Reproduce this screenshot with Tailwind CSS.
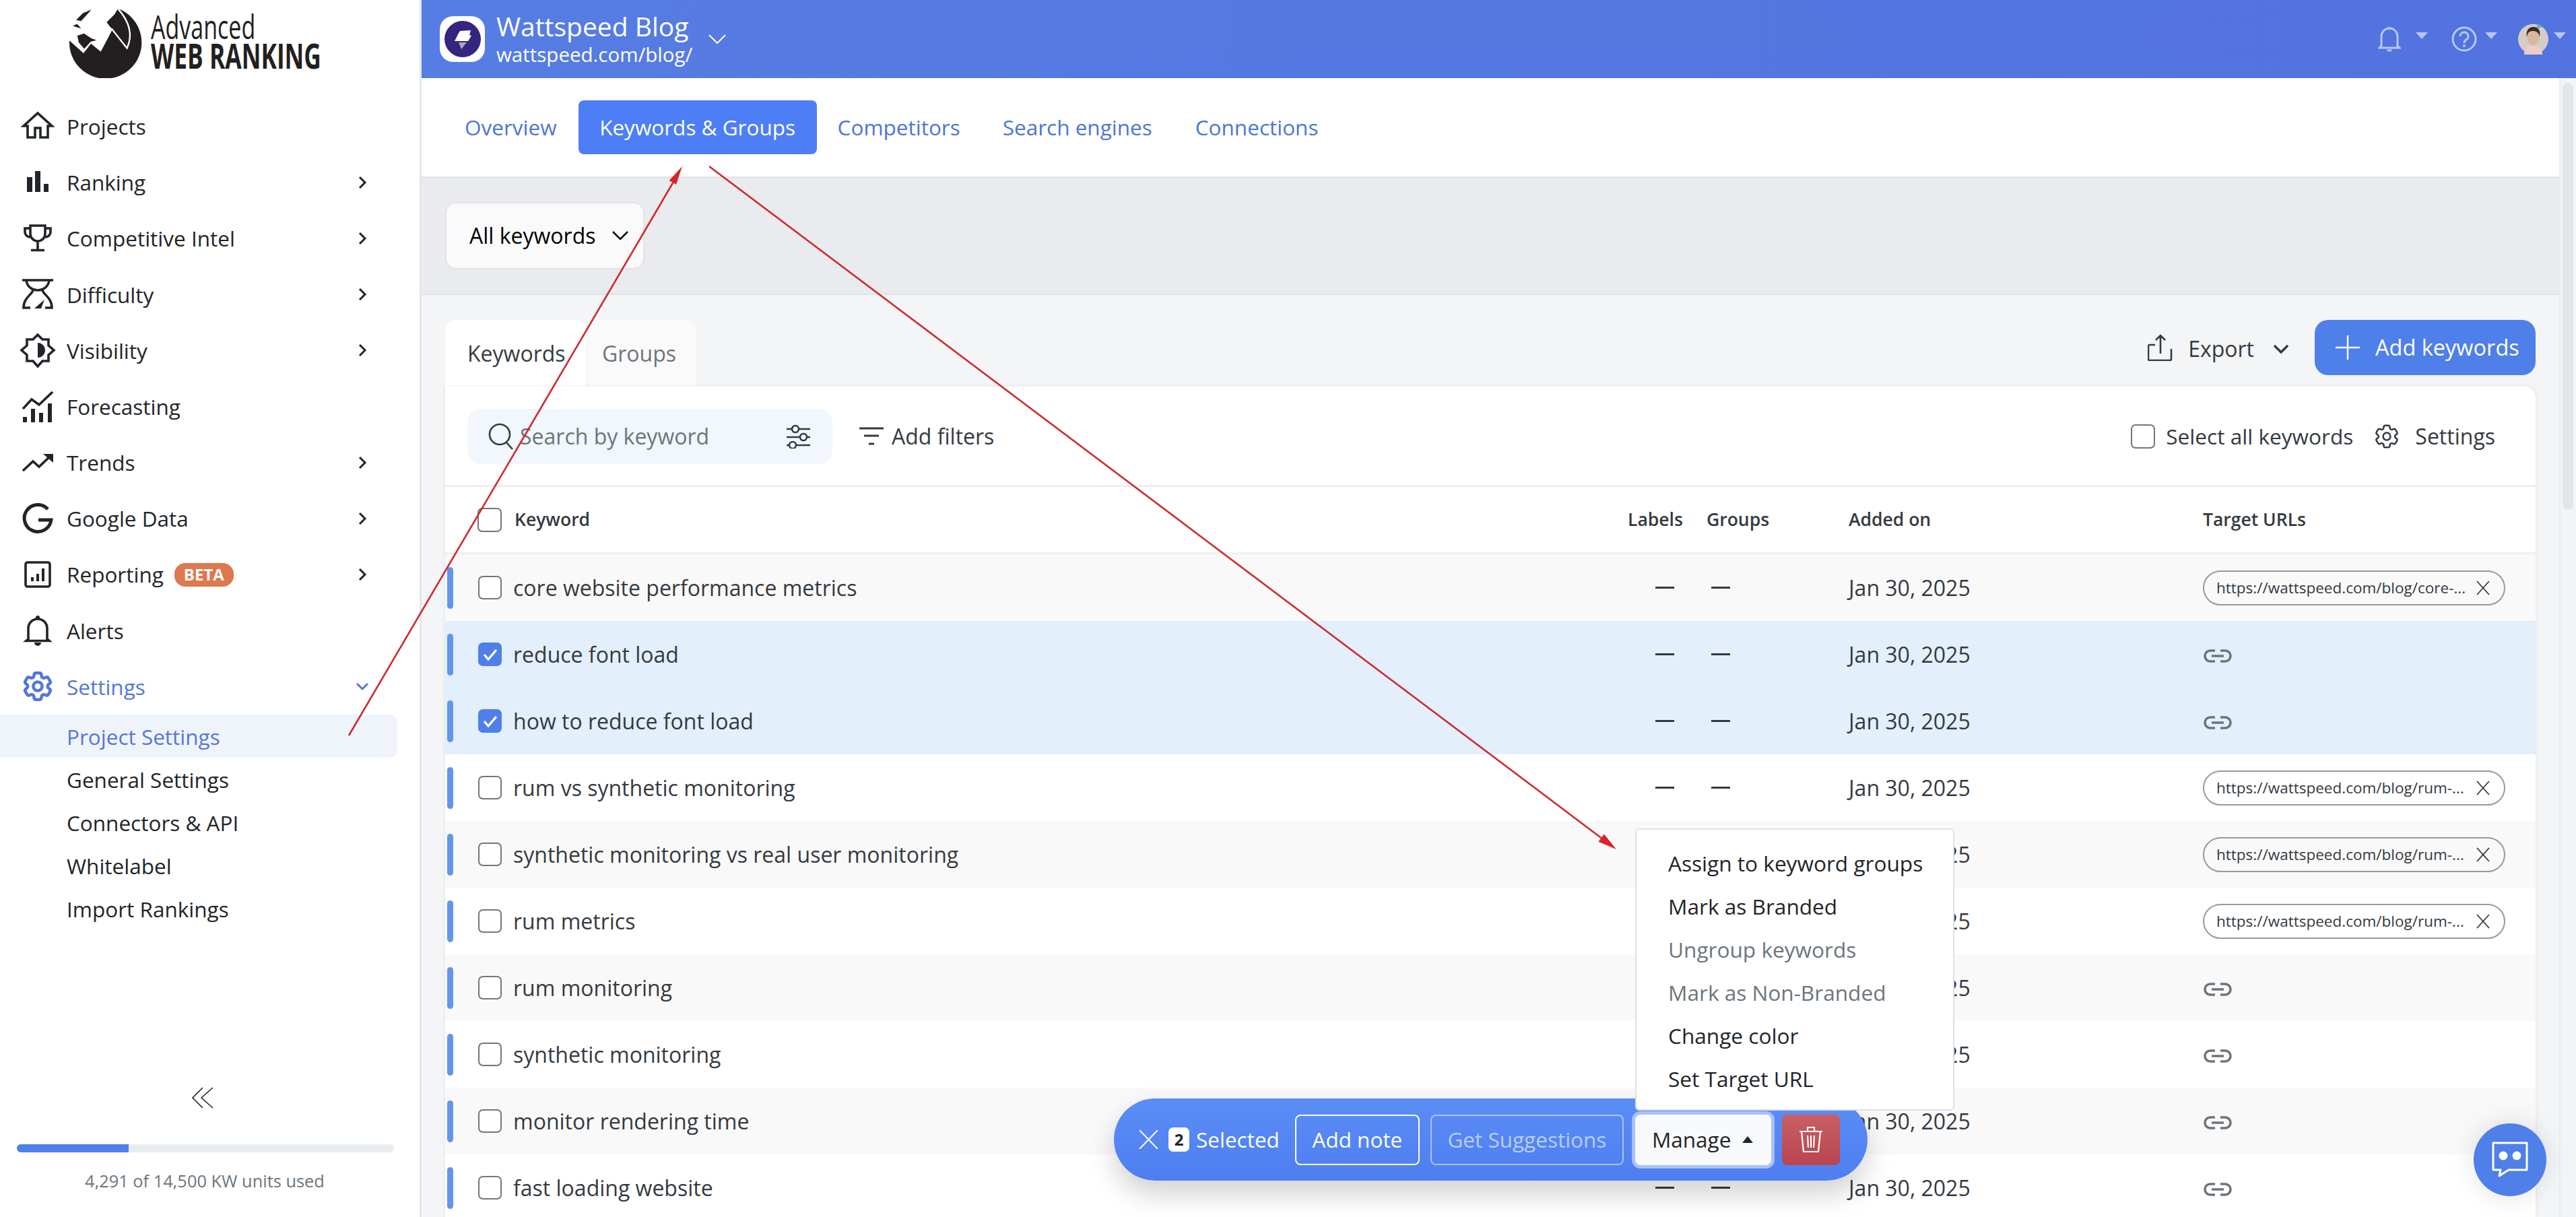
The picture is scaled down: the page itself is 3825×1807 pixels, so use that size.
<!DOCTYPE html>
<html lang="en">
<head>
  <meta charset="UTF-8" />
  <title>Keywords & Groups - Advanced Web Ranking</title>
  <script src="https://cdn.jsdelivr.net/npm/@tailwindcss/browser@4"></script>
</head>
<body class="m-0">
<div class="relative flex w-[3825px] h-[1807px] overflow-hidden bg-white font-['Open_Sans',sans-serif] text-[32px] text-[#212529]">

  <!-- sidebar -->
  <aside class="flex flex-col w-[626px] h-full shrink-0 border-r-[3px] border-[#e4e6ec] bg-white text-[31.5px]">
    <div class="flex h-[116px] pl-[102px] pt-[11px] shrink-0">
      <svg class="w-[109px] h-[105px] shrink-0" viewBox="127 35 325 312">
        <circle cx="290" cy="190" r="160" fill="#231f20" />
        <path d="M120 172 L190 235 L225 190 L268 225 L318 130 L295 100 L330 65 L345 40 L300 15 L110 20 Z" fill="#fff" />
        <path d="M190 235 L225 190 L268 225 L318 130 L385 215 Q425 130 345 40" fill="none" stroke="#fff" stroke-width="7" />
        <path d="M165 160 L195 150 L225 170 L250 180 L225 186 L196 218 L172 190 Z M160 90 L190 60 L228 44 L212 62 L182 95 Z M145 115 L165 108 L182 128 L160 122 Z" fill="#231f20" />
      </svg>
      <div class="ml-[13px] pt-[6px] text-[#231f20]">
        <div class="origin-left scale-x-[0.68] text-[50px] leading-[44px] whitespace-nowrap">Advanced</div>
        <div class="origin-left scale-x-[0.68] text-[52px] leading-[42px] font-bold whitespace-nowrap">WEB RANKING</div>
      </div>
    </div>

    <nav class="flex flex-col pt-[30px]">
      <a class="flex items-center h-[83.2px] pl-[33px]">
        <svg class="w-[46px] h-[46px] mr-[20px] overflow-visible" viewBox="0 0 46 46" fill="none" stroke="#212529" stroke-width="3.6"><path d="M2 22 L23 3 L44 22 H38 V39 H27 V25 H19 V39 H8 V22 Z" /></svg>
        <span>Projects</span>
      </a>
      <a class="flex items-center h-[83.2px] pl-[33px] w-[545px]">
        <svg class="w-[46px] h-[46px] mr-[20px]" viewBox="0 0 46 46" fill="#212529"><rect x="7" y="15" width="8" height="22" /><rect x="19" y="6" width="8" height="31" /><rect x="32" y="25" width="7" height="12" /></svg>
        <span>Ranking</span>
        <svg class="w-[14px] h-[20px] ml-auto" viewBox="0 0 14 20" fill="none" stroke="#212529" stroke-width="3"><path d="M3 2 L11 10 L3 18" /></svg>
      </a>
      <a class="flex items-center h-[83.2px] pl-[33px] w-[545px]">
        <svg class="w-[46px] h-[46px] mr-[20px]" viewBox="0 0 46 46" fill="none" stroke="#212529" stroke-width="3.6"><path d="M12 4 H34 V16 a11 11 0 0 1 -22 0 Z M12 8 H4 V13 a8 8 0 0 0 9 8 M34 8 H42 V13 a8 8 0 0 1 -9 8 M23 27 V40 M13 40.5 H33" /></svg>
        <span>Competitive Intel</span>
        <svg class="w-[14px] h-[20px] ml-auto" viewBox="0 0 14 20" fill="none" stroke="#212529" stroke-width="3"><path d="M3 2 L11 10 L3 18" /></svg>
      </a>
      <a class="flex items-center h-[83.2px] pl-[33px] w-[545px]">
        <svg class="w-[46px] h-[46px] mr-[20px]" viewBox="0 0 46 46" fill="none" stroke="#212529" stroke-width="3.6"><path d="M0 2 H46 M6 3 C8 13 16 17 23 17 C30 17 38 13 40 3 M16 17 C14 24 2 28 2 43 H12 M30 17 C32 24 44 28 44 43 H34" /><path d="M18 44 L33 31 L28 44 Z" fill="#212529" stroke="none" /></svg>
        <span>Difficulty</span>
        <svg class="w-[14px] h-[20px] ml-auto" viewBox="0 0 14 20" fill="none" stroke="#212529" stroke-width="3"><path d="M3 2 L11 10 L3 18" /></svg>
      </a>
      <a class="flex items-center h-[83.2px] pl-[33px] w-[545px]">
        <svg class="w-[46px] h-[46px] mr-[20px] overflow-visible" viewBox="0 0 46 46" fill="none" stroke="#212529" stroke-width="3.6"><path d="M23 0 L30 7 H39 V16 L47 23 L39 30 V39 H30 L23 47 L16 39 H7 V30 L-1 23 L7 16 V7 H16 Z" /><path d="M23 12 a11 11 0 0 1 0 22 Z" fill="#212529" stroke="none" /></svg>
        <span>Visibility</span>
        <svg class="w-[14px] h-[20px] ml-auto" viewBox="0 0 14 20" fill="none" stroke="#212529" stroke-width="3"><path d="M3 2 L11 10 L3 18" /></svg>
      </a>
      <a class="flex items-center h-[83.2px] pl-[33px]">
        <svg class="w-[46px] h-[46px] mr-[20px]" viewBox="0 0 46 46" fill="#212529"><rect x="1" y="38" width="6" height="8" /><rect x="13" y="26" width="6" height="20" /><rect x="25" y="32" width="6" height="14" /><rect x="38" y="18" width="6" height="28" /><path d="M1 26 L14 12 L25 20 L45 1" fill="none" stroke="#212529" stroke-width="3.6" /></svg>
        <span>Forecasting</span>
      </a>
      <a class="flex items-center h-[83.2px] pl-[33px] w-[545px]">
        <svg class="w-[46px] h-[46px] mr-[20px]" viewBox="0 0 46 46" fill="none" stroke="#212529" stroke-width="3.6"><path d="M1 35 L16 21 L25 29 L42 13" /><path d="M31 10 H46 V23 Z" fill="#212529" stroke="none" /></svg>
        <span>Trends</span>
        <svg class="w-[14px] h-[20px] ml-auto" viewBox="0 0 14 20" fill="none" stroke="#212529" stroke-width="3"><path d="M3 2 L11 10 L3 18" /></svg>
      </a>
      <a class="flex items-center h-[83.2px] pl-[33px] w-[545px]">
        <svg class="w-[46px] h-[46px] mr-[20px]" viewBox="0 0 46 46" fill="none" stroke="#212529" stroke-width="5"><path d="M38 9 A20 20 0 1 0 43 25 H24" /></svg>
        <span>Google Data</span>
        <svg class="w-[14px] h-[20px] ml-auto" viewBox="0 0 14 20" fill="none" stroke="#212529" stroke-width="3"><path d="M3 2 L11 10 L3 18" /></svg>
      </a>
      <a class="flex items-center h-[83.2px] pl-[33px] w-[545px]">
        <svg class="w-[46px] h-[46px] mr-[20px]" viewBox="0 0 46 46" fill="#212529"><rect x="5" y="5" width="36" height="36" rx="3" fill="none" stroke="#212529" stroke-width="3.6" /><rect x="13" y="27" width="4" height="6" /><rect x="21" y="22" width="4" height="11" /><rect x="29" y="14" width="4" height="19" /></svg>
        <span>Reporting</span>
        <span class="ml-[16px] flex items-center justify-center w-[88px] h-[35px] rounded-[16px] bg-[#dd784f] text-white text-[24px] font-bold">BETA</span>
        <svg class="w-[14px] h-[20px] ml-auto" viewBox="0 0 14 20" fill="none" stroke="#212529" stroke-width="3"><path d="M3 2 L11 10 L3 18" /></svg>
      </a>
      <a class="flex items-center h-[83.2px] pl-[33px]">
        <svg class="w-[46px] h-[46px] mr-[20px]" viewBox="0 0 46 46" fill="#212529"><path d="M9 36 V20 a14 14 0 0 1 28 0 V36 L40 38.5 H6 Z" fill="none" stroke="#212529" stroke-width="3.6" /><circle cx="23" cy="4" r="3" /><path d="M18 41 H28 a5 5 0 0 1 -10 0 Z" /></svg>
        <span>Alerts</span>
      </a>
      <a class="flex items-center h-[83.2px] pl-[33px] w-[545px] text-[#5577d8]">
        <svg class="w-[46px] h-[46px] mr-[20px]" viewBox="1.5 1.5 21 21" fill="none" stroke="#5577d8" stroke-width="2.1"><path d="M9.594 3.94c.09-.542.56-.94 1.11-.94h2.593c.55 0 1.02.398 1.11.94l.213 1.281c.063.374.313.686.645.87.074.04.147.083.22.127.325.196.72.257 1.075.124l1.217-.456a1.125 1.125 0 0 1 1.37.49l1.296 2.247a1.125 1.125 0 0 1-.26 1.431l-1.003.827c-.293.241-.438.613-.43.992a7.723 7.723 0 0 1 0 .255c-.008.378.137.75.43.991l1.004.827c.424.35.534.955.26 1.43l-1.298 2.247a1.125 1.125 0 0 1-1.369.491l-1.217-.456c-.355-.133-.75-.072-1.076.124a6.47 6.47 0 0 1-.22.128c-.331.183-.581.495-.644.869l-.213 1.281c-.09.543-.56.94-1.11.94h-2.594c-.55 0-1.019-.398-1.11-.94l-.213-1.281c-.062-.374-.312-.686-.644-.87a6.52 6.52 0 0 1-.22-.127c-.325-.196-.72-.257-1.076-.124l-1.217.456a1.125 1.125 0 0 1-1.369-.49l-1.297-2.247a1.125 1.125 0 0 1 .26-1.431l1.004-.827c.292-.24.437-.613.43-.991a6.932 6.932 0 0 1 0-.255c.007-.38-.138-.751-.43-.992l-1.004-.827a1.125 1.125 0 0 1-.26-1.43l1.297-2.247a1.125 1.125 0 0 1 1.37-.491l1.216.456c.356.133.751.072 1.076-.124.072-.044.146-.086.22-.128.332-.183.582-.495.644-.869l.214-1.28Z" /><circle cx="12" cy="12" r="3" /></svg>
        <span>Settings</span>
        <svg class="w-[20px] h-[14px] ml-auto -mr-[3px]" viewBox="0 0 20 14" fill="none" stroke="#5577d8" stroke-width="3"><path d="M2 3 L10 11 L18 3" /></svg>
      </a>
      <a class="flex items-center h-[64.2px] w-[590px] pl-[99px] rounded-r-[10px] bg-[#eff4fb] text-[#5577d8]">Project Settings</a>
      <a class="flex items-center h-[64.2px] pl-[99px]">General Settings</a>
      <a class="flex items-center h-[64.2px] pl-[99px]">Connectors &amp; API</a>
      <a class="flex items-center h-[64.2px] pl-[99px]">Whitelabel</a>
      <a class="flex items-center h-[64.2px] pl-[99px]">Import Rankings</a>
    </nav>

    <div class="mt-auto flex flex-col">
      <svg class="w-[32px] h-[32px] ml-[285px]" viewBox="0 0 32 32" fill="none" stroke="#212529" stroke-width="1.6"><path d="M16 1 L1 16 L16 31 M31 1 L14 16 L31 31" /></svg>
      <div class="mt-[53px] ml-[25px] w-[560px] h-[12px] rounded-full bg-[#e9ecef] overflow-hidden">
        <div class="h-full bg-[#4f7fe8]" style="width: 29.6%"></div>
      </div>
      <div class="mt-[26px] mb-[38px] text-center text-[25.4px] leading-[32px] text-[#6c757d] ml-[2px] w-[604px]">4,291 of 14,500 KW units used</div>
    </div>
  </aside>

  <!-- main -->
  <main class="flex flex-col flex-1 min-w-0">
    <header class="flex items-center h-[116px] shrink-0 bg-gradient-to-r from-[#567de3] to-[#5272e0] text-white">
      <div class="ml-[27px] flex items-center justify-center w-[67px] h-[68px] rounded-[20px] bg-white">
        <svg class="w-[54px] h-[54px]" viewBox="7 7 54 54"><circle cx="34" cy="34" r="27" fill="#35257f" /><path d="M30 22 L46 21 L44 28 L47 29 L42 37 L22 37 L27 27 Z" fill="#fff" /><path d="M28 39 H40 L32 49 Z" fill="#a9a3c9" /></svg>
      </div>
      <div class="ml-[17px] flex flex-col">
        <div class="text-[39px] leading-[47px] -mt-[2px]">Wattspeed Blog</div>
        <div class="text-[29.5px] leading-[38px]">wattspeed.com/blog/</div>
      </div>
      <svg class="ml-[24px] w-[26px] h-[16px]" viewBox="0 0 26 16" fill="none" stroke="#fff" stroke-width="2"><path d="M1 2 L13 14 L25 2" /></svg>
      <div class="ml-auto flex items-center pr-[15px]">
        <svg class="w-[34px] h-[38px]" viewBox="0 0 34 38" fill="none" stroke="#b7c6f4" stroke-width="3"><path d="M5 29 V15 a12 12 0 0 1 24 0 V29 L32 32 H2 Z" /><circle cx="17" cy="3" r="2" fill="#b7c6f4" stroke="none" /><path d="M13 34.5 H21 a4 3 0 0 1 -8 0 Z" fill="#b7c6f4" stroke="none" /></svg>
        <span class="ml-[22px] mb-[10px] w-0 h-0 border-x-[9px] border-t-[10px] border-x-transparent border-t-[#b7c6f4]"></span>
        <svg class="ml-[35px] w-[38px] h-[38px]" viewBox="0 0 38 38" fill="none" stroke="#b7c6f4" stroke-width="3"><circle cx="19" cy="19" r="17" /><path d="M13 15 a6 6 0 1 1 9 5 c-2 1 -3 2 -3 5" /><circle cx="19" cy="29" r="2" fill="#b7c6f4" stroke="none" /></svg>
        <span class="ml-[12px] mb-[10px] w-0 h-0 border-x-[9px] border-t-[10px] border-x-transparent border-t-[#b7c6f4]"></span>
        <svg class="ml-[30.5px] w-[45px] h-[46px]" viewBox="0 0 45 46"><circle cx="22.5" cy="23" r="22.5" fill="#d5ccc6" /><path d="M9 46 C9 36 15 33 22.5 33 C30 33 36 36 36 46 Z" fill="#eccdca" /><ellipse cx="22.5" cy="20" rx="9" ry="12" fill="#dcb59e" /><path d="M13 20 C11 8 18 5 23 5 C29 5 34 9 32 20 C31 13 27 11 22 11 C17 11 14 13 13 20 Z" fill="#3b2c28" /><circle cx="31" cy="4" r="3" fill="#5bb3a8" /></svg>
        <span class="ml-[8.5px] mb-[10px] w-0 h-0 border-x-[9px] border-t-[10px] border-x-transparent border-t-[#b7c6f4]"></span>
      </div>
    </header>

    <div class="flex flex-1 min-h-0">
      <div class="flex flex-col flex-1 min-w-0 bg-[#f3f5f7]">
        <!-- page tabs -->
        <div class="flex items-center h-[148px] shrink-0 pl-[64px] bg-white border-b-[2px] border-[#dfe2e7] text-[31.5px] text-[#4d76d6]">
          <a>Overview</a>
          <a class="ml-[32px] flex items-center justify-center w-[354px] h-[80px] rounded-[8px] bg-[#4e7ef5] text-white">Keywords &amp; Groups</a>
          <a class="ml-[31px]">Competitors</a>
          <a class="ml-[63px]">Search engines</a>
          <a class="ml-[64px]">Connections</a>
        </div>
        <!-- group filter band -->
        <div class="flex items-center h-[174px] shrink-0 pl-[35px] bg-[#e9ebef] border-b-[2px] border-[#e0e3e7]">
          <button class="flex items-center w-[296px] h-[100px] pl-[34px] rounded-[16px] border-[2px] border-[#e3e3e3] bg-[#fafafa] text-black">
            All keywords
            <svg class="ml-[24px] w-[26px] h-[16px]" viewBox="0 0 26 16" fill="none" stroke="#111" stroke-width="2.6"><path d="M2 2 L13 13 L24 2" /></svg>
          </button>
        </div>

        <div class="flex flex-col flex-1 min-h-0 pl-[35px] pr-[35px] pt-[37px]">
          <!-- tabs and actions -->
          <div class="flex h-[99px] shrink-0">
            <div class="flex items-center w-[210px] h-[99px] pl-[33px] rounded-t-[16px] bg-white text-[#343a40]">Keywords</div>
            <div class="flex items-center w-[160px] h-[99px] ml-[2px] pl-[21px] rounded-t-[16px] bg-[#fafafa] text-[#6c757d]">Groups</div>
            <div class="ml-auto flex items-start text-[#343a40]">
              <svg class="mt-[21px] w-[38px] h-[40px]" viewBox="0 0 38 40" fill="none" stroke="#343a40" stroke-width="2.6"><path d="M11 16 H3 a2 2 0 0 0 -2 2 V37 a2 2 0 0 0 2 2 H33 a2 2 0 0 0 2 -2 V22 M19 29 V3 M12 9 L19 2 L26 9" /></svg>
              <span class="ml-[22px] mt-[19px]">Export</span>
              <svg class="ml-[28px] mt-[35px] w-[24px] h-[16px]" viewBox="0 0 24 16" fill="none" stroke="#343a40" stroke-width="3.4"><path d="M2 3 L12 13 L22 3" /></svg>
              <button class="ml-[38px] flex items-center w-[328px] h-[82px] pl-[31px] rounded-[20px] bg-[#4f7fe8] text-white text-[32.5px] font-medium">
                <svg class="w-[36px] h-[36px] mr-[23px]" viewBox="0 0 36 36" fill="none" stroke="#fff" stroke-width="2.4"><path d="M18 0 V36 M0 18 H36" /></svg>
                Add keywords
              </button>
            </div>
          </div>

          <!-- keyword table -->
          <div class="flex flex-col flex-1 min-h-0 bg-white rounded-tr-[16px] shadow-[0_0_6px_rgba(0,0,0,0.08)]">
            <div class="flex items-center h-[149px] shrink-0 pt-[1px] pl-[33px] pr-[60px] border-b-[3px] border-[#eff0f2] text-[#343a40]">
              <div class="flex items-center w-[542px] h-[82px] pl-[31px] rounded-[20px] bg-[#f1f7fd] text-[#6c757d]">
                <svg class="w-[38px] h-[40px] mr-[9px] shrink-0" viewBox="0 0 38 40" fill="none" stroke="#343a40" stroke-width="2.6"><circle cx="17" cy="17" r="15" /><path d="M27 29 L36 39" /></svg>
                <span>Search by keyword</span>
                <svg class="ml-auto mr-[33px] w-[36px] h-[36px]" viewBox="0 0 36 36" fill="none" stroke="#343a40" stroke-width="2.6"><path d="M1 7 H36 M1 19 H36 M1 31 H36" /><circle cx="14" cy="7" r="5" fill="#f1f7fd" /><circle cx="26" cy="19" r="5" fill="#f1f7fd" /><circle cx="10" cy="31" r="5" fill="#f1f7fd" /></svg>
              </div>
              <svg class="ml-[40px] mr-[12px] w-[36px] h-[30px]" viewBox="0 0 36 30" fill="none" stroke="#343a40" stroke-width="3"><path d="M0 3 H36 M7 14 H29 M14 26 H22" /></svg>
              <span>Add filters</span>
              <span class="ml-auto w-[36px] h-[36px] rounded-[7px] border-[2px] border-[#757575] bg-white"></span>
              <span class="ml-[16px] text-[31.6px]">Select all keywords</span>
              <svg class="ml-[31px] w-[38px] h-[38px]" viewBox="1.5 1.5 21 21" fill="none" stroke="#343a40" stroke-width="1.4"><path d="M9.594 3.94c.09-.542.56-.94 1.11-.94h2.593c.55 0 1.02.398 1.11.94l.213 1.281c.063.374.313.686.645.87.074.04.147.083.22.127.325.196.72.257 1.075.124l1.217-.456a1.125 1.125 0 0 1 1.37.49l1.296 2.247a1.125 1.125 0 0 1-.26 1.431l-1.003.827c-.293.241-.438.613-.43.992a7.723 7.723 0 0 1 0 .255c-.008.378.137.75.43.991l1.004.827c.424.35.534.955.26 1.43l-1.298 2.247a1.125 1.125 0 0 1-1.369.491l-1.217-.456c-.355-.133-.75-.072-1.076.124a6.47 6.47 0 0 1-.22.128c-.331.183-.581.495-.644.869l-.213 1.281c-.09.543-.56.94-1.11.94h-2.594c-.55 0-1.019-.398-1.11-.94l-.213-1.281c-.062-.374-.312-.686-.644-.87a6.52 6.52 0 0 1-.22-.127c-.325-.196-.72-.257-1.076-.124l-1.217.456a1.125 1.125 0 0 1-1.369-.49l-1.297-2.247a1.125 1.125 0 0 1 .26-1.431l1.004-.827c.292-.24.437-.613.43-.991a6.932 6.932 0 0 1 0-.255c.007-.38-.138-.751-.43-.992l-1.004-.827a1.125 1.125 0 0 1-.26-1.43l1.297-2.247a1.125 1.125 0 0 1 1.37-.491l1.216.456c.356.133.751.072 1.076-.124.072-.044.146-.086.22-.128.332-.183.582-.495.644-.869l.214-1.28Z" /><circle cx="12" cy="12" r="3" /></svg>
              <span class="ml-[23px]">Settings</span>
            </div>

            <div class="grid grid-cols-[1756px_117px_211px_526px_1fr] items-center h-[100px] shrink-0 border-b-[3px] border-[#eff0f2] text-[26.5px] font-semibold text-[#343a40]">
              <div class="flex items-center pl-[48px]">
                <span class="w-[36px] h-[36px] mr-[19px] rounded-[7px] border-[2px] border-[#757575] bg-white"></span>
                Keyword
              </div>
              <div>Labels</div>
              <div>Groups</div>
              <div>Added on</div>
              <div>Target URLs</div>
            </div>

            <div id="rows" class="flex flex-col"></div>
          </div>
        </div>
      </div>
      <!-- scrollbar -->
      <div class="w-[25px] shrink-0 pt-[7px] pl-[5px] bg-[#f3f4f6] shadow-[inset_2px_0_2px_rgba(0,0,0,0.04)]">
        <div class="w-[16px] h-[634px] rounded-full bg-[#e3e5e9]"></div>
      </div>
    </div>
  </main>

  <!-- selection bar -->
  <div class="absolute left-[1654px] top-[1631px] z-10 flex items-center w-[1119px] h-[122px] rounded-[61px] bg-gradient-to-b from-[#5b8df6] to-[#4e7ef0] text-[31.5px] text-white shadow-[0_20px_40px_rgba(0,0,0,0.18)]">
    <svg class="ml-[37px] w-[29px] h-[28px]" viewBox="0 0 29 28" fill="none" stroke="#fff" stroke-width="2"><path d="M1 0 L28 28 M28 0 L1 28" /></svg>
    <span class="ml-[15px] flex items-center justify-center w-[31px] h-[36px] rounded-[7px] bg-white text-[#212529] text-[24px] font-bold">2</span>
    <span class="ml-[10px]">Selected</span>
    <button class="ml-[23px] w-[185px] h-[75px] rounded-[8px] border-[2.5px] border-white">Add note</button>
    <button class="ml-[16px] w-[287px] h-[75px] rounded-[8px] border-[2.5px] border-white/50 text-white/60">Get Suggestions</button>
    <button class="ml-[17px] flex items-center w-[202px] h-[75px] pl-[25px] rounded-[8px] bg-[#f8f9fa] text-[#212529] ring-[5px] ring-[#a9c1f6]">
      Manage
      <span class="ml-[17px] w-0 h-0 border-x-[8px] border-b-[10px] border-x-transparent border-b-[#212529]"></span>
    </button>
    <button class="ml-[16px] flex items-center justify-center w-[86px] h-[75px] rounded-[8px] bg-gradient-to-b from-[#c95f65] to-[#b9444f]">
      <svg class="w-[36px] h-[40px]" viewBox="0 0 36 40" fill="none" stroke="#fff" stroke-width="2.2"><path d="M1 8 H35 M13 8 V2 H23 V8 M4 8 L7 38 H29 L32 8 M13 14 L14 32 M18 14 V32 M23 14 L22 32" /></svg>
    </button>
  </div>

  <!-- manage menu -->
  <div class="absolute left-[2428px] top-[1230px] z-20 flex flex-col w-[474px] h-[419px] pt-[18px] pl-[47px] rounded-[6px] border-[2px] border-[#dee0e3] bg-white text-[31.6px]">
    <a class="flex items-center h-[64px] shrink-0">Assign to keyword groups</a>
    <a class="flex items-center h-[64px] shrink-0">Mark as Branded</a>
    <a class="flex items-center h-[64px] shrink-0 text-[#6c757d]">Ungroup keywords</a>
    <a class="flex items-center h-[64px] shrink-0 text-[#6c757d]">Mark as Non-Branded</a>
    <a class="flex items-center h-[64px] shrink-0">Change color</a>
    <a class="flex items-center h-[64px] shrink-0">Set Target URL</a>
  </div>

  <!-- chat button -->
  <button class="absolute left-[3673px] top-[1668px] z-10 flex items-center justify-center w-[108px] h-[108px] rounded-full bg-[#4f7fe8] shadow-[0_0_40px_rgba(0,0,0,0.12)]">
    <svg class="w-[54px] h-[54px]" viewBox="0 0 54 54"><path d="M2 2 H52 V42 H25 L11 51 L13 42 H2 Z" fill="none" stroke="#fff" stroke-width="3" stroke-linejoin="round" /><circle cx="17" cy="21" r="6.5" fill="#fff" /><circle cx="37" cy="21" r="6.5" fill="#fff" /></svg>
  </button>

  <!-- annotation arrows -->
  <svg class="absolute left-0 top-0 z-30 w-[3825px] h-[1807px] pointer-events-none" viewBox="0 0 3825 1807">
    <path d="M518 1092 L1000 270 M1053 247 L2380 1246" fill="none" stroke="#cf2a2e" stroke-width="2.6" />
    <path d="M1013 247 L1004 274 L993.6 268 Z M2400 1261 L2373.4 1249.8 L2381.8 1238.6 Z" fill="#d8232a" />
  </svg>
</div>

<script>
  const rows = [
    ["core website performance metrics", "https://wattspeed.com/blog/core-..."],
    ["reduce font load", null, true],
    ["how to reduce font load", null, true],
    ["rum vs synthetic monitoring", "https://wattspeed.com/blog/rum-..."],
    ["synthetic monitoring vs real user monitoring", "https://wattspeed.com/blog/rum-..."],
    ["rum metrics", "https://wattspeed.com/blog/rum-..."],
    ["rum monitoring", null],
    ["synthetic monitoring", null],
    ["monitor rendering time", null],
    ["fast loading website", null],
  ];

  const linkIcon = `<svg class="w-[44px] h-[24px] mt-[5px]" viewBox="0 0 44 24" fill="none" stroke="#6c757d" stroke-width="3.6"><path d="M18 4 H11 a8 8 0 0 0 0 16 H18 M26 4 H33 a8 8 0 0 1 0 16 H26 M13 12 H31" /></svg>`;
  const unchecked = `<span class="w-[35px] h-[35px] mr-[17px] rounded-[7px] border-[2px] border-[#757575] bg-white"></span>`;
  const checked = `<span class="flex items-center justify-center w-[35px] h-[35px] mr-[17px] rounded-[7px] bg-[#4f7fe8]"><svg class="w-[22px] h-[20px]" viewBox="0 0 22 20" fill="none" stroke="#fff" stroke-width="3.4"><path d="M2 10 L8 17 L20 3" /></svg></span>`;

  function chip(url) {
    return `<div class="flex items-center w-[449px] h-[52px] pl-[18px] rounded-full border-[2px] border-[#999] text-[22.5px]">
      <span class="whitespace-nowrap">${url}</span>
      <svg class="ml-auto mr-[21px] w-[20px] h-[22px]" viewBox="0 0 20 22" fill="none" stroke="#343a40" stroke-width="1.8"><path d="M1 1 L19 21 M19 1 L1 21" /></svg>
    </div>`;
  }

  document.getElementById("rows").innerHTML = rows.map((row, i) => {
    const bg = row[2] ? "bg-[#e3effb]" : (i % 2 === 0 ? "bg-[#f9f9f9]" : "bg-white");
    return `<div class="grid grid-cols-[1756px_117px_211px_526px_1fr] items-center h-[99px] shrink-0 text-[#343a40] ${bg}">
      <div class="flex items-center pl-[3px]">
        <span class="w-[9px] h-[62px] mr-[37px] rounded-full bg-[#6196ea]"></span>
        ${row[2] ? checked : unchecked}
        <span>${row[0]}</span>
      </div>
      <div class="pl-[41px]"><div class="w-[28px] h-[3px] bg-[#343a40]"></div></div>
      <div class="pl-[7px]"><div class="w-[28px] h-[3px] bg-[#343a40]"></div></div>
      <div>Jan 30, 2025</div>
      <div>${row[1] ? chip(row[1]) : linkIcon}</div>
    </div>`;
  }).join("");
</script>
</body>
</html>
